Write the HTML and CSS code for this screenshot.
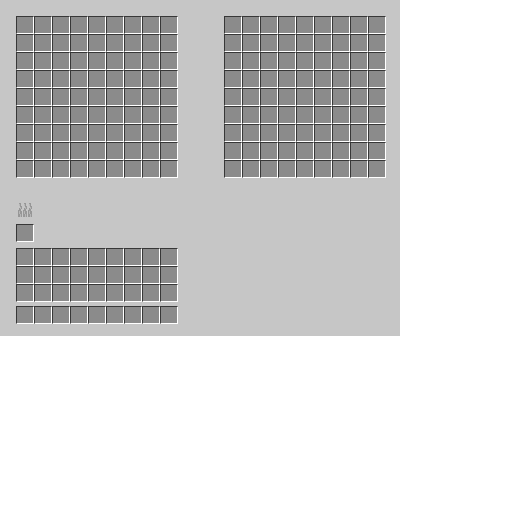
FILE: index.html
```html
<!DOCTYPE html>
<html>

	<head>
		<meta charset="UTF-8">
		<title></title>
		<link rel="stylesheet" href="styles.css">
	</head>

	<body>
		<main class="panel">
			<section class="top">
				<div class="grid" id="left"></div>
				<div class="grid" id="right"></div>
			</section>
			<svg class="flames" width="16" height="16" viewBox="0 0 16 16" shape-rendering="crispEdges">
				<defs>
					<g id="flame">
						<path fill="#979797" d="M3 1h2v3h1v3H5v2h1v6H2V8h1V6h1V4H3z"/>
						<path fill="#b6b6b6" d="M3 2h1v2H3zM4 5h1v2H4zM3 9h1v3h1v3H4v-3H3z"/>
					</g>
				</defs>
				<use href="#flame"/>
				<use href="#flame" x="5"/>
				<use href="#flame" x="10"/>
			</svg>
			<div class="slot fuel"></div>
			<div class="grid" id="inv"></div>
			<div class="grid hotbar" id="bar"></div>
		</main>
		<script>
			function fill(id, n) {
				var box = document.getElementById(id);
				for(var i = 0; i < n; i++) {
					var s = document.createElement('div');
					s.className = 'slot';
					box.appendChild(s);
				}
			}
			fill('left', 81);
			fill('right', 81);
			fill('inv', 27);
			fill('bar', 9);
		</script>
	</body>

</html>
```

FILE: styles.css
```css
body {
	margin: 0;
	background: #fff;
}

.panel {
	width: 400px;
	height: 336px;
	box-sizing: border-box;
	padding: 16px;
	background: #c6c6c6;
}

.top {
	display: flex;
	gap: 46px;
}

.grid {
	display: grid;
	grid-template-columns: repeat(9, 18px);
	grid-auto-rows: 18px;
}

/* four 1px edges, corners bottom-left and top-right stay grey */
.slot {
	width: 18px;
	height: 18px;
	background:
		linear-gradient(#373737, #373737) 0 0 / 17px 1px no-repeat,
		linear-gradient(#373737, #373737) 0 0 / 1px 17px no-repeat,
		linear-gradient(#fff, #fff) 1px 17px / 17px 1px no-repeat,
		linear-gradient(#fff, #fff) 17px 1px / 1px 17px no-repeat,
		#8b8b8b;
}

.flames {
	display: block;
	margin-top: 24px;
}

.fuel {
	margin: 6px 0;
}

.hotbar {
	margin-top: 4px;
}
```
